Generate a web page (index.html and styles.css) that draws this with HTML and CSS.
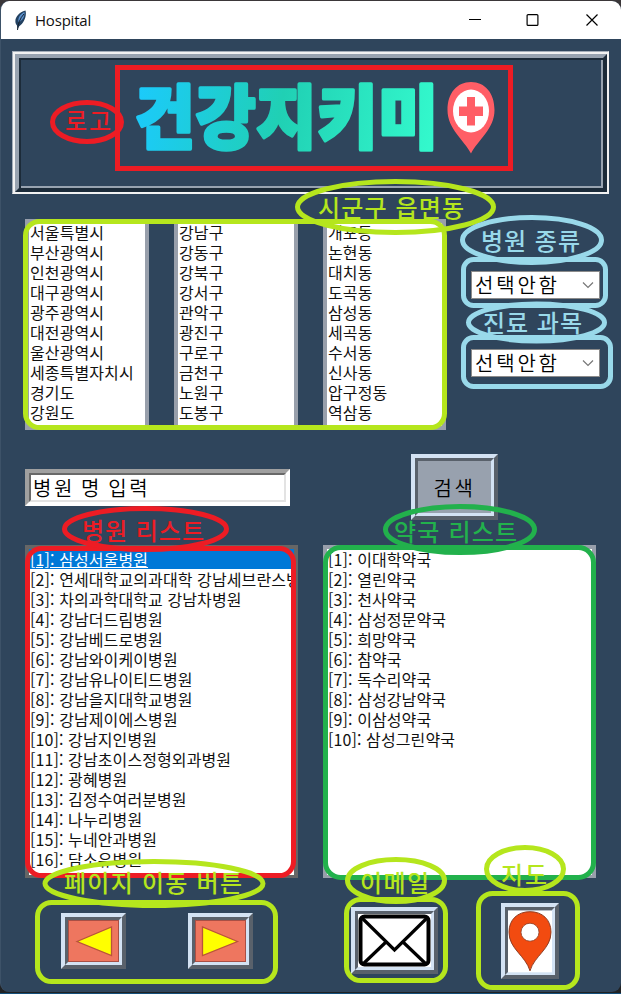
FILE: index.html
```html
<!DOCTYPE html>
<html lang="ko">
<head>
<meta charset="utf-8">
<title>Hospital</title>
<link rel="stylesheet" href="styles.css">
</head>
<body>
<div class="window">
  <header class="titlebar">
    <svg class="feather" width="13" height="21" viewBox="0 0 13 21">
      <path d="M3.500 19.500L3 15.500C-1 11 2.500 3 11.500 .5C13 6 10 13 5 16.500Z" fill="#234161"/>
      <path d="M4.500 12C3.500 8 6.500 3.500 10.500 2C11 6 8.500 11 4.500 12Z" fill="#5b91cf"/>
      <path d="M3.500 20C4 14 6 8 10 4" fill="none" stroke="#17202b" stroke-width="1"/>
    </svg>
    <span class="title">Hospital</span>
    <svg class="controls" width="130" height="14" viewBox="0 0 130 14" fill="none" stroke="#000">
      <path d="M1 6.500H13" stroke-width="1"/>
      <rect x="59.100" y="1.600" width="10.800" height="10.800" rx="1" stroke-width="1.200"/>
      <path d="M118.500 1.500L129.500 12.500M129.500 1.500L118.500 12.500" stroke-width="1.200"/>
    </svg>
  </header>

  <main class="content">
    <section class="banner"><div class="ridge"><div class="groove">
      <svg class="logo" width="364" height="80" viewBox="133 77 364 80">
        <defs>
          <linearGradient id="brand" gradientUnits="userSpaceOnUse" x1="136" y1="50" x2="435" y2="104">
            <stop offset="0" stop-color="#1bcaff"/>
            <stop offset=".5" stop-color="#20d0b4"/>
            <stop offset="1" stop-color="#33f8cc"/>
          </linearGradient>
        </defs>
        <text class="logo-text" transform="scale(1 1.060)" x="135" y="134.500" textLength="303">건강지키미</text>
        <path d="M471 153.500C464 140 447.500 129 447.500 110C447.500 93 457 82 471 82S494.500 93 494.500 110C494.500 129 478 140 471 153.500Z" fill="#ff5e66"/>
        <ellipse cx="471" cy="111" rx="18" ry="21.500" fill="#fff"/>
        <path d="M467 97h8v9.500h8v9.500h-8v9.500h-8v-9.500h-8v-9.500h8z" fill="#ff5e66"/>
      </svg>
    </div></div></section>

    <section class="filters">
      <ul class="listbox region">
        <li>서울특별시</li><li>부산광역시</li><li>인천광역시</li><li>대구광역시</li><li>광주광역시</li>
        <li>대전광역시</li><li>울산광역시</li><li>세종특별자치시</li><li>경기도</li><li>강원도</li>
      </ul>
      <ul class="listbox region">
        <li>강남구</li><li>강동구</li><li>강북구</li><li>강서구</li><li>관악구</li>
        <li>광진구</li><li>구로구</li><li>금천구</li><li>노원구</li><li>도봉구</li>
      </ul>
      <ul class="listbox region">
        <li>개포동</li><li>논현동</li><li>대치동</li><li>도곡동</li><li>삼성동</li>
        <li>세곡동</li><li>수서동</li><li>신사동</li><li>압구정동</li><li>역삼동</li>
      </ul>
      <div class="combos">
        <div class="combo"><span>선택안함</span><svg width="12" height="8" viewBox="0 0 12 8"><path d="M1 1.500L6 6.500L11 1.500" fill="none" stroke="#777" stroke-width="1.200"/></svg></div>
        <div class="combo"><span>선택안함</span><svg width="12" height="8" viewBox="0 0 12 8"><path d="M1 1.500L6 6.500L11 1.500" fill="none" stroke="#777" stroke-width="1.200"/></svg></div>
      </div>
    </section>

    <section class="search">
      <div class="entry"><div class="entry-inner">병원 명 입력</div></div>
      <div class="raised search-button"><div class="sunken">검색</div></div>
    </section>

    <section class="results">
      <ul class="listbox hospitals">
        <li class="selected">[1]: 삼성서울병원</li><li>[2]: 연세대학교의과대학 강남세브란스병원</li><li>[3]: 차의과학대학교 강남차병원</li><li>[4]: 강남더드림병원</li>
        <li>[5]: 강남베드로병원</li><li>[6]: 강남와이케이병원</li><li>[7]: 강남유나이티드병원</li><li>[8]: 강남을지대학교병원</li>
        <li>[9]: 강남제이에스병원</li><li>[10]: 강남지인병원</li><li>[11]: 강남초이스정형외과병원</li><li>[12]: 광혜병원</li>
        <li>[13]: 김정수여러분병원</li><li>[14]: 나누리병원</li><li>[15]: 누네안과병원</li><li>[16]: 담소유병원</li>
      </ul>
      <ul class="listbox pharmacies">
        <li>[1]: 이대학약국</li><li>[2]: 열린약국</li><li>[3]: 천사약국</li><li>[4]: 삼성정문약국</li><li>[5]: 희망약국</li>
        <li>[6]: 참약국</li><li>[7]: 독수리약국</li><li>[8]: 삼성강남약국</li><li>[9]: 이삼성약국</li><li>[10]: 삼성그린약국</li>
      </ul>
    </section>

    <section class="actions">
      <div class="raised arrow"><div class="sunken">
        <svg width="51" height="42" viewBox="0 0 51 42"><rect x=".5" y=".5" width="50" height="41" fill="#ee765f" stroke="#a94f44"/><path d="M9 21.500L43.500 7V35.500Z" fill="#ff0" stroke="#b9533a" stroke-width="1.300"/></svg>
      </div></div>
      <div class="raised arrow next"><div class="sunken">
        <svg width="51" height="42" viewBox="0 0 51 42"><rect x=".5" y=".5" width="50" height="41" fill="#ee765f" stroke="#a94f44"/><path d="M42.500 21.500L7.500 7V35.500Z" fill="#ff0" stroke="#b9533a" stroke-width="1.300"/></svg>
      </div></div>
      <div class="raised mail"><div class="sunken">
        <svg width="73" height="53" viewBox="0 0 73 53"><rect width="73" height="53" fill="#fff"/><g fill="none" stroke="#000"><rect x="2.500" y="2.500" width="68" height="48" rx="4" stroke-width="4"/><path d="M4 4L36.500 36L69 4M5 50L28 28M68 50L45 28" stroke-width="3.200"/></g></svg>
      </div></div>
      <div class="raised map"><div class="sunken">
        <svg width="45" height="63" viewBox="0 0 45 63"><rect width="45" height="63" fill="#fff"/><path d="M22.500 61.500C18 46 1 39 1 22C1 9 10 1 22.500 1S44 9 44 22C44 39 27 46 22.500 61.500Z" fill="#f24b10" stroke="#8b3b22"/><circle cx="22.500" cy="22" r="9.200" fill="#fff" stroke="#8b3b22" stroke-width=".8"/></svg>
      </div></div>
    </section>
  </main>
</div>

<svg class="notes" width="621" height="994" viewBox="0 0 621 994">
  <g class="red">
    <rect x="117.500" y="67.500" width="393" height="101"/>
    <ellipse cx="87" cy="122" rx="34.500" ry="19.500"/>
    <text x="65" y="130" textLength="46">로고</text>
    <rect x="27.500" y="548.500" width="266" height="327" rx="14"/>
    <ellipse cx="145.500" cy="529" rx="81" ry="20.500"/>
    <text x="82" y="540" textLength="122">병원 리스트</text>
  </g>
  <g class="green">
    <rect x="325.500" y="547.500" width="268" height="330" rx="15"/>
    <ellipse cx="460" cy="529.500" rx="74.500" ry="23"/>
    <text x="394" y="541" textLength="123">약국 리스트</text>
  </g>
  <g class="lime">
    <rect x="25.500" y="221.500" width="419" height="206" rx="14"/>
    <ellipse cx="395.500" cy="207" rx="98" ry="25.500"/>
    <text x="318" y="217" textLength="146">시군구 읍면동</text>
    <rect x="37.500" y="902.500" width="238" height="79" rx="14"/>
    <ellipse cx="154" cy="883.500" rx="109" ry="22"/>
    <text x="64" y="892" textLength="178">페이지 이동 버튼</text>
    <rect x="346.500" y="899.500" width="99" height="81" rx="14"/>
    <ellipse cx="396" cy="880.500" rx="48.500" ry="21"/>
    <text x="360" y="892" textLength="69">이메일</text>
    <rect x="478.500" y="893.500" width="99" height="94" rx="14"/>
    <ellipse cx="525" cy="869" rx="38.500" ry="21.500"/>
    <text x="501" y="884" textLength="46">지도</text>
  </g>
  <g class="sky">
    <rect x="463.500" y="259.500" width="142" height="46" rx="10"/>
    <ellipse cx="532" cy="240" rx="69.500" ry="22.500"/>
    <text x="481" y="250" textLength="99">병원 종류</text>
    <rect x="463.500" y="337.500" width="147" height="49" rx="10"/>
    <ellipse cx="536.500" cy="322.500" rx="68" ry="18.500"/>
    <text x="483" y="332" textLength="99">진료 과목</text>
  </g>
</svg>
</body>
</html>
```
FILE: styles.css
```css
* { box-sizing: border-box; }
body {
  margin: 0;
  width: 621px;
  height: 994px;
  overflow: hidden;
  position: relative;
  background: linear-gradient(#3b3739 0 50%, #202224 50% 993px, #14507c 993px);
  font-family: "Noto Sans CJK KR", sans-serif;
  color: #111;
}
.window {
  margin-top: 1px;
  height: 991px;
  border-radius: 9px;
  overflow: hidden;
  background: #2f455c;
  border-left: 1px solid #3d5268;
}
.titlebar {
  height: 38px;
  margin-left: -1px;
  padding: 0 23px 0 14px;
  display: flex;
  align-items: center;
  background: #fff;
}
.title {
  margin-left: 8px;
  font: 15px/20px "Open Sans", sans-serif;
  letter-spacing: -0.200px;
}
.controls { margin-left: auto; }
.content {
  margin-left: -1px;
  padding: 12px 12px 0;
}
.banner {
  height: 143px;
  border: 1px solid #a4aeb9;
  border-right-color: #f2f2f2;
  border-bottom-color: #f2f2f2;
}
.ridge {
  height: 100%;
  border: 2px solid #f2f2f2;
  border-right-width: 1px;
  border-bottom-width: 1px;
}
.groove {
  height: 100%;
  border-style: solid;
  border-width: 4px;
  border-color: #98a3b0 #1c2b39 #1c2b39 #98a3b0;
  box-shadow: inset 2px 2px #1c2b39, inset -2px -2px #98a3b0;
}
.logo {
  display: block;
  margin: 19px 0 0 114px;
}
.logo-text {
  font-size: 65px;
  font-weight: 900;
  fill: url(#brand);
  stroke: url(#brand);
  stroke-width: 3.500px;
  stroke-linejoin: round;
}
.filters {
  margin: 25px 0 0 13px;
  display: grid;
  grid-template-columns: 124px 124px 123px 129px;
  column-gap: 25px;
}
.listbox {
  list-style: none;
  margin: 0;
  padding: 0;
  overflow: hidden;
  border: 4px solid #989fab;
  background: #fff;
  font-size: 16px;
  line-height: 20px;
  letter-spacing: 0.100px;
}
.listbox li {
  height: 20px;
  padding-left: 1px;
  white-space: nowrap;
}
.region { height: 211px; }
.region li { line-height: 18px; }
.combos {
  padding-top: 52px;
  display: flex;
  flex-direction: column;
  gap: 50px;
}
.combo {
  height: 28px;
  padding: 0 5px 0 3px;
  display: flex;
  align-items: center;
  justify-content: space-between;
  border: 1px solid #8b8b8b;
  background: #fff;
  color: #000;
  font-size: 20px;
  font-weight: 350;
  line-height: 26px;
  letter-spacing: 2.800px;
}
.search {
  margin: 24px 0 0 13px;
  display: flex;
  align-items: flex-start;
  gap: 121px;
}
.entry {
  width: 265px;
  height: 37px;
  margin-top: 15px;
  border: 4px solid;
  border-color: #a0a0a0 #fff #fff #a0a0a0;
}
.entry-inner {
  height: 100%;
  padding-left: 2px;
  border: 2px solid;
  border-color: #696969 #e3e3e3 #e3e3e3 #696969;
  background: #fff;
  color: #000;
  font-size: 20px;
  font-weight: 350;
  line-height: 25px;
  letter-spacing: 2.500px;
  word-spacing: -1.800px;
}
.raised {
  border: 4px solid;
  border-color: #d3e2f3 #59616b #59616b #d3e2f3;
}
.sunken {
  height: 100%;
  display: flex;
  align-items: center;
  justify-content: center;
  border: 3px solid;
  border-color: #59616b #d3e2f3 #d3e2f3 #59616b;
  background: #98a1ae;
}
.search-button {
  width: 87px;
  height: 66px;
  color: #000;
  font-size: 20px;
  font-weight: 350;
  letter-spacing: 2.500px;
}
.results {
  margin: 25px 0 0 13px;
  display: grid;
  grid-template-columns: 273px 273px;
  column-gap: 25px;
}
.hospitals, .pharmacies {
  height: 333px;
  border-bottom-width: 3px;
}
.hospitals { border-color: #666; }
.selected {
  background: #0078d7;
  color: #fff;
  text-decoration: underline;
}
.actions {
  margin: 25px 0 0 49px;
  display: flex;
  align-items: flex-start;
}
.actions .raised { flex: none; }
.arrow { width: 65px; height: 56px; margin-top: 10px; }
.next { margin-left: 62px; }
.mail { width: 87px; height: 67px; margin: 4px 0 0 98px; }
.map { width: 58px; height: 76px; margin-left: 63px; }
.notes {
  position: absolute;
  left: 0;
  top: 0;
}
.notes rect, .notes ellipse {
  fill: none;
  stroke: currentColor;
  stroke-width: 5px;
}
.notes text {
  fill: currentColor;
  font-size: 24px;
  font-weight: 500;
}
.red { color: #ed1c24; }
.green { color: #22b14c; }
.lime { color: #b5e61d; }
.sky { color: #99d9ea; }
```
